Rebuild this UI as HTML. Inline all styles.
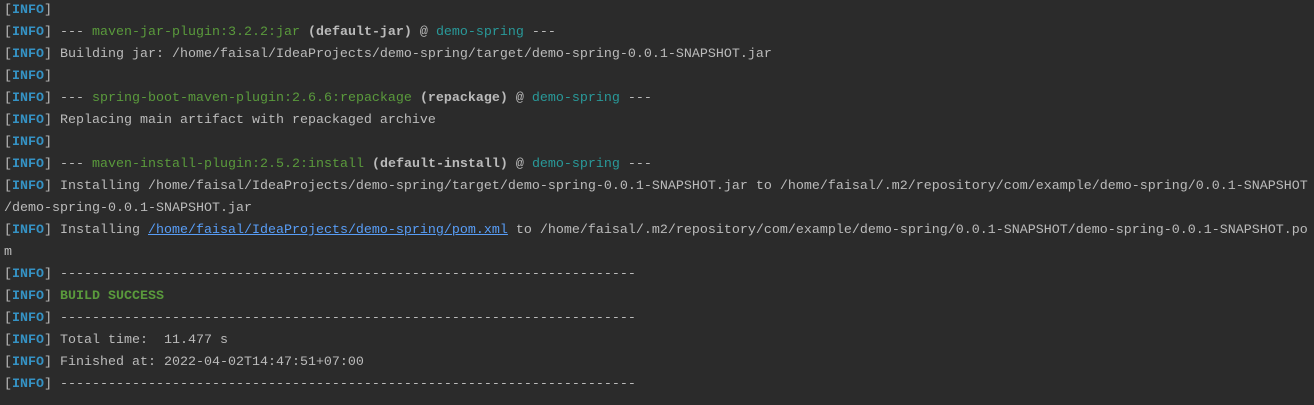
<!DOCTYPE html>
<html><head><meta charset="utf-8"><style>
html,body{margin:0;padding:0;background:#2b2b2b;width:1314px;height:405px;overflow:hidden}
pre{margin:0;padding:0 0 0 4px;font-family:"Liberation Mono",monospace;font-size:13.33px;line-height:22px;color:#bbbbbb;position:relative;top:0px;white-space:pre}
.i{color:#3592c4;font-weight:bold}
.g{color:#5a9a3c}
.c{color:#299999}
.b{font-weight:bold}
.l{color:#589df6;text-decoration:underline}
.s{color:#5a9a3c;font-weight:bold}
</style></head><body><pre>[<span class="i">INFO</span>]
[<span class="i">INFO</span>] --- <span class="g">maven-jar-plugin:3.2.2:jar</span> <span class="b">(default-jar)</span> @ <span class="c">demo-spring</span> ---
[<span class="i">INFO</span>] Building jar: /home/faisal/IdeaProjects/demo-spring/target/demo-spring-0.0.1-SNAPSHOT.jar
[<span class="i">INFO</span>]
[<span class="i">INFO</span>] --- <span class="g">spring-boot-maven-plugin:2.6.6:repackage</span> <span class="b">(repackage)</span> @ <span class="c">demo-spring</span> ---
[<span class="i">INFO</span>] Replacing main artifact with repackaged archive
[<span class="i">INFO</span>]
[<span class="i">INFO</span>] --- <span class="g">maven-install-plugin:2.5.2:install</span> <span class="b">(default-install)</span> @ <span class="c">demo-spring</span> ---
[<span class="i">INFO</span>] Installing /home/faisal/IdeaProjects/demo-spring/target/demo-spring-0.0.1-SNAPSHOT.jar to /home/faisal/.m2/repository/com/example/demo-spring/0.0.1-SNAPSHOT
/demo-spring-0.0.1-SNAPSHOT.jar
[<span class="i">INFO</span>] Installing <span class="l">/home/faisal/IdeaProjects/demo-spring/pom.xml</span> to /home/faisal/.m2/repository/com/example/demo-spring/0.0.1-SNAPSHOT/demo-spring-0.0.1-SNAPSHOT.po
m
[<span class="i">INFO</span>] ------------------------------------------------------------------------
[<span class="i">INFO</span>] <span class="s">BUILD SUCCESS</span>
[<span class="i">INFO</span>] ------------------------------------------------------------------------
[<span class="i">INFO</span>] Total time:  11.477 s
[<span class="i">INFO</span>] Finished at: 2022-04-02T14:47:51+07:00
[<span class="i">INFO</span>] ------------------------------------------------------------------------</pre></body></html>
